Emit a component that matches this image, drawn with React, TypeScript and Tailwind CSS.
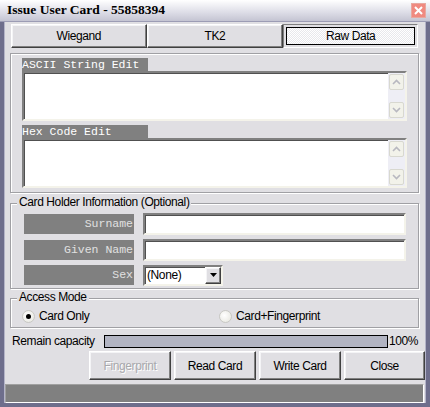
import type { ReactNode } from 'react'

const SANS = "font-['Liberation_Sans',Arial,sans-serif] text-[12px] tracking-[-0.4px]"
const MONO = "font-['Liberation_Mono','Courier_New',monospace]"

const raised =
    'border border-t-white border-l-white border-r-[#404040] border-b-[#404040] shadow-[inset_-1px_-1px_0_#808080,inset_1px_1px_0_#f4f4f6]'
const sunken =
    'border-2 border-t-[#808080] border-l-[#808080] border-r-[#f4f3ea] border-b-[#f4f3ea] shadow-[inset_1px_1px_0_#505050]'

function Chevron({ up }: { up?: boolean }) {
    return (
        <svg width="9" height="6" viewBox="0 0 9 6" className={up ? '' : 'rotate-180'}>
            <path d="M1 5 L4.5 1.5 L8 5" fill="none" stroke="#b8b8c0" strokeWidth="1.6" />
        </svg>
    )
}

function ScrollBar() {
    return (
        <div className="flex flex-col w-[17px] h-full bg-[#eeeef5] py-[1px]">
            <div className="h-[16px] mx-[1px] rounded-[2px] border border-[#d8d8d0] bg-[#f2f2ea] flex items-center justify-center">
                <Chevron up />
            </div>
            <div className="flex-1" />
            <div className="h-[16px] mx-[1px] rounded-[2px] border border-[#d8d8d0] bg-[#f2f2ea] flex items-center justify-center">
                <Chevron />
            </div>
        </div>
    )
}

function EditBox({ label }: { label: string }) {
    return (
        <div className="flex flex-col">
            <div
                className={`${MONO} h-[13px] w-[126px] bg-[#808080] text-white text-[11.5px] leading-[13px] whitespace-pre`}
            >
                {label}
            </div>
            <div className={`${sunken} h-[50px] bg-white flex justify-end`}>
                <ScrollBar />
            </div>
        </div>
    )
}

function Legend({ children }: { children: ReactNode }) {
    return (
        <span className={`${SANS} absolute -top-[9px] left-[6px] bg-[#e0dfe3] px-[2px] leading-[15px] text-black`}>
            {children}
        </span>
    )
}

function Field({ label, children }: { label: string; children: ReactNode }) {
    return (
        <div className="flex items-center gap-[9px]">
            <div
                className={`${MONO} w-[110px] h-[20px] bg-[#808080] text-[#e0e0e0] text-[11.5px] leading-[20px] text-right pr-[1px] whitespace-pre`}
            >
                {label}
            </div>
            {children}
        </div>
    )
}

function Radio({ checked, label }: { checked?: boolean; label: string }) {
    return (
        <div className={`${SANS} flex items-center gap-[4px] text-black`}>
            <div className="w-[13px] h-[13px] rounded-full border border-[#c8c8c4] bg-[radial-gradient(circle_at_40%_40%,#ffffff,#e4e4dc)] flex items-center justify-center">
                {checked && <div className="w-[5px] h-[5px] rounded-full bg-black" />}
            </div>
            <span>{label}</span>
        </div>
    )
}

function Button({ label, disabled, w }: { label: string; disabled?: boolean; w: string }) {
    return (
        <div
            className={`${raised} ${SANS} ${w} h-[29px] bg-[#e0dfe3] flex items-center justify-center ${
                disabled ? 'text-[#a8a8ac] [text-shadow:1px_1px_0_#ffffff]' : 'text-black'
            }`}
        >
            {label}
        </div>
    )
}

export default function App() {
    return (
        <div className="w-[430px] h-[407px] bg-[#e0dfe3] flex flex-col border-l-[4px] border-r-[4px] border-b-[4px] border-l-[#6e6e8c] border-r-[#6e6e8c] border-b-[#6e6e8c] shadow-[inset_1px_0_0_#b4b4c8,inset_-1px_0_0_#b4b4c8]">
            {/* title bar */}
            <div className="h-[22px] -mx-[4px] flex items-center justify-between pl-[7px] pr-[4px] bg-[linear-gradient(#ffffff,#dcdce6_60%,#c4c4d2)] border-b border-[#9c9cb4]">
                <span className="font-['Liberation_Serif',serif] font-bold text-[13.5px] text-black tracking-[0px]">
                    Issue User Card - 55858394
                </span>
                <div className="w-[15px] h-[15px] bg-[#f08a80] border border-[#e8a8a0] flex items-center justify-center">
                    <svg width="9" height="9" viewBox="0 0 9 9">
                        <path d="M1 1 L8 8 M8 1 L1 8" stroke="white" strokeWidth="2" />
                    </svg>
                </div>
            </div>

            {/* tabs */}
            <div className={`${SANS} flex mt-[2px] ml-[7px] mr-[8px] h-[24px]`}>
                <div className={`${raised} w-[136px] flex items-center justify-center`}>Wiegand</div>
                <div className={`${raised} w-[137px] flex items-center justify-center`}>TK2</div>
                <div className="w-[135px] border border-t-[#808080] border-l-[#808080] border-r-white border-b-white p-[2px]">
                    <div className="h-full border border-black bg-[repeating-conic-gradient(#ffffff_0%_25%,#e8e8ec_0%_50%)] bg-size-[2px_2px] flex items-center justify-center">
                        Raw Data
                    </div>
                </div>
            </div>

            {/* raw data panel */}
            <div className="mt-[5px] ml-[6px] mr-[7px] h-[141px] border border-[#a0a0a4] shadow-[inset_1px_1px_0_#ffffff,1px_1px_0_#ffffff] px-[11px] pt-[4px] flex flex-col gap-[4px]">
                <EditBox label="ASCII String Edit" />
                <EditBox label="Hex Code Edit" />
            </div>

            {/* card holder info */}
            <div className="relative mt-[10px] ml-[6px] mr-[7px] h-[87px] border border-[#a0a0a4] shadow-[inset_1px_1px_0_#ffffff,1px_1px_0_#ffffff] pl-[13px] pt-[9px] flex flex-col gap-[4px]">
                <Legend>Card Holder Information (Optional)</Legend>
                <Field label="Surname">
                    <div className={`${sunken} w-[263px] h-[22px] bg-white`} />
                </Field>
                <Field label="Given Name">
                    <div className={`${sunken} w-[263px] h-[22px] bg-white`} />
                </Field>
                <Field label="Sex">
                    <div className={`${sunken} w-[80px] h-[21px] bg-white flex items-center`}>
                        <span className={`${SANS} flex-1 pl-[2px] text-black`}>(None)</span>
                        <div className={`${raised} w-[16px] h-full bg-[#e0dfe3] flex items-center justify-center`}>
                            <svg width="7" height="4" viewBox="0 0 7 4">
                                <path d="M0 0 H7 L3.5 4 Z" fill="black" />
                            </svg>
                        </div>
                    </div>
                </Field>
            </div>

            {/* access mode */}
            <div className="relative mt-[9px] ml-[6px] mr-[7px] h-[30px] border border-[#a0a0a4] shadow-[inset_1px_1px_0_#ffffff,1px_1px_0_#ffffff] flex items-center pl-[11px] pt-[6px]">
                <Legend>Access Mode</Legend>
                <div className="w-[197px]">
                    <Radio checked label="Card Only" />
                </div>
                <Radio label="Card+Fingerprint" />
            </div>

            {/* capacity */}
            <div className={`${SANS} mt-[6px] ml-[8px] flex items-center h-[14px] text-black`}>
                <span className="w-[92px]">Remain capacity</span>
                <div className="w-[284px] h-[13px] border border-black bg-[#b2b4c2]" />
                <span className="ml-[1px]">100%</span>
            </div>

            {/* buttons */}
            <div className="mt-[3px] ml-[85px] flex gap-[3px]">
                <Button label="Fingerprint" disabled w="w-[82px]" />
                <Button label="Read Card" w="w-[82px]" />
                <Button label="Write Card" w="w-[82px]" />
                <Button label="Close" w="w-[81px]" />
            </div>

            {/* status bar */}
            <div className="mt-[4px] ml-[1px] mr-[2px] h-[19px] bg-[#808080] border border-t-[#a0a0a0] border-l-[#a0a0a0] border-r-white border-b-white" />
        </div>
    )
}
